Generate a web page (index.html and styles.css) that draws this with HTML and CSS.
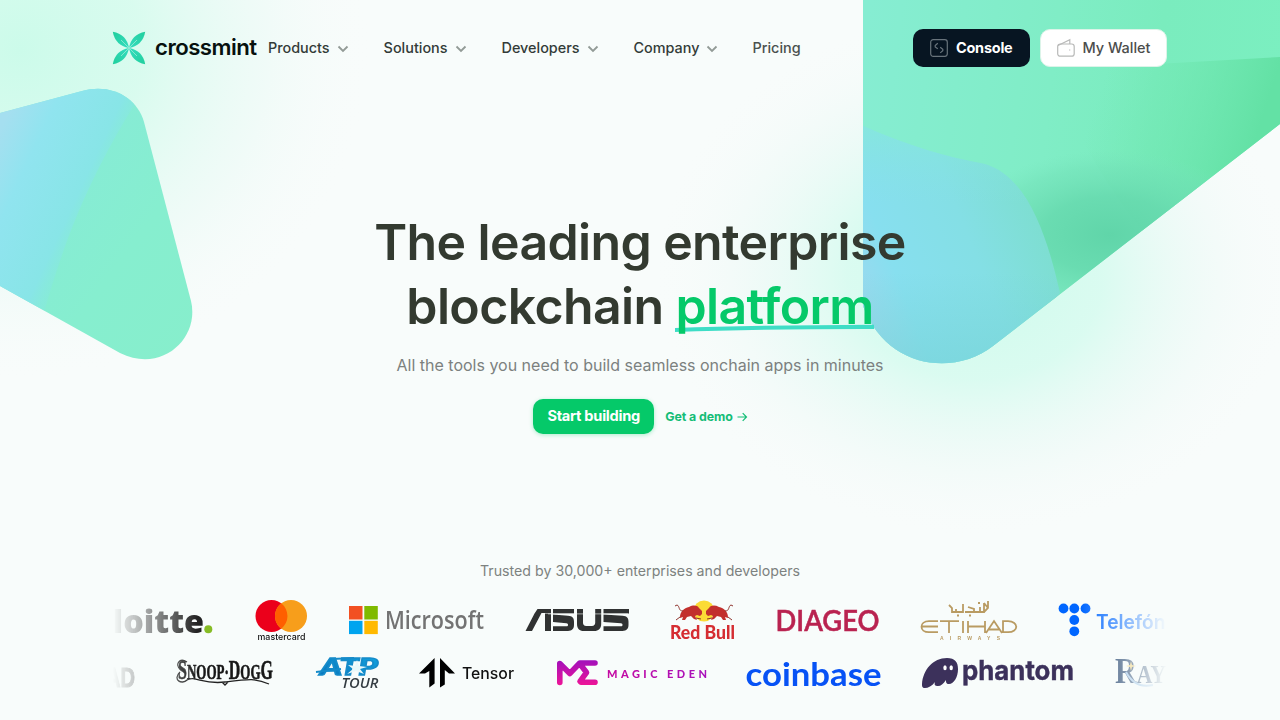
FILE: index.html
```html
<!DOCTYPE html>
<html lang="en">
<head>
<meta charset="utf-8">
<title>Crossmint</title>
<link rel="stylesheet" href="styles.css">
</head>
<body>
<svg class="backdrop" viewBox="0 0 1280 720" aria-hidden="true">
  <defs>
    <radialGradient id="glowA"><stop offset="0" stop-color="#c4fbe7"/><stop offset=".35" stop-color="#cdfbea" stop-opacity=".85"/><stop offset=".7" stop-color="#e0f9f1" stop-opacity=".4"/><stop offset="1" stop-color="#f8fbfa" stop-opacity="0"/></radialGradient>
    <radialGradient id="glowB"><stop offset="0" stop-color="#c9fbea"/><stop offset=".4" stop-color="#d3fbee" stop-opacity=".9"/><stop offset=".7" stop-color="#e7f9f4" stop-opacity=".5"/><stop offset="1" stop-color="#f8fafa" stop-opacity="0"/></radialGradient>
    <linearGradient id="leftMint" x1="0" y1="0" x2="1" y2="1"><stop offset="0" stop-color="#87e8dd"/><stop offset=".6" stop-color="#86eecf"/><stop offset="1" stop-color="#87eecb"/></linearGradient>
    <linearGradient id="leftBlue" gradientUnits="userSpaceOnUse" x1="0" y1="130" x2="118" y2="185"><stop offset="0" stop-color="#a5dff0"/><stop offset=".3" stop-color="#90e4ef"/><stop offset=".75" stop-color="#88e5e7"/><stop offset="1" stop-color="#86ebd8" stop-opacity="0"/></linearGradient>
    <linearGradient id="mint" gradientUnits="userSpaceOnUse" x1="863" y1="60" x2="1280" y2="110"><stop offset="0" stop-color="#86edd2"/><stop offset=".45" stop-color="#80edc6"/><stop offset=".7" stop-color="#7aecbe"/><stop offset="1" stop-color="#7befc0"/></linearGradient>
    <linearGradient id="wing" gradientUnits="userSpaceOnUse" x1="1110" y1="60" x2="1265" y2="110"><stop offset="0" stop-color="#71e7b0" stop-opacity="0"/><stop offset="1" stop-color="#63e1a5"/></linearGradient>
    <radialGradient id="shade"><stop offset="0" stop-color="#60d5a9"/><stop offset=".45" stop-color="#66d9ae" stop-opacity=".85"/><stop offset=".8" stop-color="#70dfb6" stop-opacity=".45"/><stop offset="1" stop-color="#78e5bd" stop-opacity="0"/></radialGradient>
    <linearGradient id="blue" gradientUnits="userSpaceOnUse" x1="863" y1="300" x2="1050" y2="225"><stop offset="0" stop-color="#99d9ef"/><stop offset=".2" stop-color="#87dfef"/><stop offset=".6" stop-color="#84dfe5"/><stop offset="1" stop-color="#7ddecf"/></linearGradient>
    <linearGradient id="blueTop" x1="0" y1="0" x2="0" y2="1"><stop offset="0" stop-color="#86ebd6" stop-opacity=".6"/><stop offset=".32" stop-color="#88e3e8" stop-opacity="0"/><stop offset=".6" stop-color="#76d3d2" stop-opacity="0"/><stop offset="1" stop-color="#76d3d6" stop-opacity=".65"/></linearGradient>
    <clipPath id="leftClip"><path d="M0 113 82 91C112 83 137 98 144 122L191 301C200 338 162 374 120 353L0 286Z"/></clipPath>
    <clipPath id="rightClip"><path d="M863 0H1280V124L993 346C953 377 886 368 863 306Z"/></clipPath>
  </defs>
  <ellipse cx="20" cy="50" rx="350" ry="330" fill="url(#glowA)" opacity=".85"/>
  <ellipse cx="975" cy="275" rx="320" ry="260" fill="url(#glowB)" opacity=".9"/>
  <g clip-path="url(#leftClip)">
    <rect y="80" width="210" height="290" fill="url(#leftMint)"/>
    <path d="M0 80H150C98 160 68 225 42 320H0Z" fill="url(#leftBlue)"/>
  </g>
  <g clip-path="url(#rightClip)">
    <rect x="863" width="417" height="370" fill="url(#mint)"/>
    <path d="M1050 70 1280 57V180L1150 240Q1090 170 1050 70Z" fill="url(#wing)"/>
    <ellipse cx="1110" cy="235" rx="150" ry="85" fill="url(#shade)"/>
    <path d="M863 126C903 144 946 157 985 164C1029 177 1048 240 1060 293L1000 370H863Z" fill="url(#blue)"/>
    <path d="M863 126C903 144 946 157 985 164C1029 177 1048 240 1060 293L1000 370H863Z" fill="url(#blueTop)"/>
  </g>
</svg>

<header class="header">
  <a class="brand">
    <svg width="34" height="34" viewBox="0 0 34 34">
      <defs><linearGradient id="leaf" x1="0" y1="0" x2="1" y2="1"><stop offset="0" stop-color="#20cf9c"/><stop offset="1" stop-color="#35dcc0"/></linearGradient></defs>
      <g fill="url(#leaf)">
        <path id="petal" d="M.8.8Q14.5 3.2 17 17 3.2 14.5.8.8Z"/>
        <use href="#petal" transform="rotate(90 17 17)"/><use href="#petal" transform="rotate(180 17 17)"/><use href="#petal" transform="rotate(270 17 17)"/>
      </g>
      <path d="m9 9 16 16M25 9 9 25" stroke="#9becd5" stroke-width=".8"/>
    </svg>
    <span class="brand-name">crossmint</span>
  </a>
  <nav class="nav">
    <a>Products<svg class="chev" viewBox="0 0 12 8"><path d="m1.5 1.5 4.5 4.5 4.5-4.5"/></svg></a>
    <a>Solutions<svg class="chev" viewBox="0 0 12 8"><path d="m1.5 1.5 4.5 4.5 4.5-4.5"/></svg></a>
    <a>Developers<svg class="chev" viewBox="0 0 12 8"><path d="m1.5 1.5 4.5 4.5 4.5-4.5"/></svg></a>
    <a>Company<svg class="chev" viewBox="0 0 12 8"><path d="m1.5 1.5 4.5 4.5 4.5-4.5"/></svg></a>
    <a class="plain">Pricing</a>
  </nav>
  <div class="actions">
    <a class="btn console"><svg width="18" height="18" viewBox="0 0 18 18"><rect x=".7" y=".7" width="16.6" height="16.6" rx="2.5"/><path d="M7.8 4.2 5.2 6.5V8L7.8 9.8M10.2 8.2 12.8 10.2V11.7L10.2 13.9"/></svg><span>Console</span></a>
    <a class="btn wallet"><svg width="18" height="18" viewBox="0 0 18 18"><rect x=".7" y="5" width="16.5" height="12.2" rx="2.5"/><path d="M1 6.5 12.8.8V5M12.7 10.6v1"/></svg><span>My Wallet</span></a>
  </div>
</header>

<main class="hero">
  <h1>The leading enterprise<br>blockchain <span class="accent">platform<svg class="underline" viewBox="0 0 200 8" preserveAspectRatio="none"><path d="M0 4Q80 1.2 200 .8V5Q90 4.8 0 8Z"/></svg></span></h1>
  <p class="lead">All the tools you need to build seamless onchain apps in minutes</p>
  <div class="cta"><a class="start">Start building</a><a class="demo">Get a demo <svg width="10" height="10" viewBox="0 0 10 10"><path d="M.5 5h9M5.7 1.2 9.5 5 5.7 8.8"/></svg></a></div>
</main>

<section class="trusted">
  <p>Trusted by 30,000+ enterprises and developers</p>
  <div class="logos">
    <div class="row first">
      <svg width="100" height="42" viewBox="113 599 100 42"><text x="69" y="633" class="deloitte" textLength="135" lengthAdjust="spacingAndGlyphs">Deloitte</text><circle cx="208.3" cy="629.3" r="4" fill="#86bc25"/></svg>
      <svg width="52" height="42" viewBox="255 599 52 42"><circle cx="271.5" cy="616" r="16" fill="#eb001b"/><circle cx="291" cy="616" r="16" fill="#f79e1b"/><path d="M281.2 603.3a16 16 0 0 1 0 25.4 16 16 0 0 1 0-25.4Z" fill="#ff5f00"/><text x="257.5" y="640" class="mc" textLength="48" lengthAdjust="spacingAndGlyphs">mastercard</text></svg>
      <svg width="136" height="42" viewBox="348 599 136 42"><path fill="#f25022" d="M349 606h13.5v13.5H349z"/><path fill="#7fba00" d="M364.3 606h13.5v13.5h-13.5z"/><path fill="#00a4ef" d="M349 620.8h13.5v13.3H349z"/><path fill="#ffb900" d="M364.3 620.8h13.5v13.3h-13.5z"/><text x="385" y="629" class="ms" textLength="99" lengthAdjust="spacingAndGlyphs">Microsoft</text></svg>
      <svg width="105" height="42" viewBox="525 599 105 42" fill="#303232"><path d="M537.5 609H551v4h-9.5L532 631h-6.5L534.5 613.5ZM545 613.5h6V631h-6ZM553 609h21v4.5h-21ZM553 614.5l15 1.3c4.5.4 6 2.3 6 6v3c0 4-2 6.2-6 6.2h-15v-4.7h13.5c1 0 1.5-.4 1.5-1.5s-.5-1.5-1.5-1.6l-13.5-1.3ZM577 609h6v13.8c0 2 1 3.2 3.2 3.2H592c2 0 3.2-1.2 3.2-3.2V609h6v15c0 4.7-2.8 7-7 7h-10.5c-4.3 0-6.7-2.3-6.7-7ZM603.5 609h25.5v4.5h-25.5ZM603.5 614.5l19 1.3c4.5.4 6 2.3 6 6v3c0 4-2 6.2-6 6.2h-19v-4.7H621c1 0 1.5-.4 1.5-1.5s-.5-1.5-1.5-1.6l-17.5-1.3Z"/><path d="M548 613.9h80" stroke="#f8fbfa" stroke-width=".6"/></svg>
      <svg width="66" height="42" viewBox="670 599 66 42"><circle cx="704" cy="611" r="10.5" fill="#fbdb36"/><g id="bull"><path fill="#c2302d" d="M680 617c0-5 4-9 9-10 4-2 8-2 10 1l3 3v3l-2 2-3-1-2 1 2 4-3-1-3-3-4 1-2 3h-3l1-3-3 1Z"/><path fill="none" stroke="#8e332c" d="M683 611c-5 0-3-5-6-6l-2 1M680 617l-4 3M696 618l5 1"/></g><use href="#bull" transform="matrix(-1 0 0 1 1408 0)"/><text x="670" y="639" class="rb" textLength="65" lengthAdjust="spacingAndGlyphs">Red Bull</text></svg>
      <svg width="103" height="42" viewBox="776 599 103 42"><text x="774.5" y="631" class="diageo" textLength="104" lengthAdjust="spacingAndGlyphs">DIAGEO</text></svg>
      <svg width="98" height="42" viewBox="920 599 98 42"><g fill="none" stroke="#b99b62" stroke-width="1.8"><path d="M949 605l3 3v4h11v-8M956 612v-3M965 612h9v-3l-6-2M974 612h6v-5M980 612h4v-9M984 612l4-4V601M988 608l-4-5M978 603h2M969 615.5h2M957 615.5h2"/><path d="M938 621.2h-9c-10 0-10 11 0 11h9M922 626.5h16M940 621.2h19M949 621v12M963 621v12M968 621v12M985 621v12M968 626.5h17M986 633l8-12 8 12M989 629.5h10M1003 632.2v-11h5c11 0 11 11 0 11Z"/></g><text x="940" y="640" class="airways" textLength="60">AIRWAYS</text></svg>
      <svg width="132" height="42" viewBox="1059 599 132 42"><g fill="#0066ff"><circle cx="1063.5" cy="608.5" r="4.9"/><circle cx="1074.3" cy="608.5" r="4.9"/><circle cx="1085.5" cy="608.5" r="4.9"/><circle cx="1074.3" cy="620" r="4.9"/><circle cx="1074.3" cy="631.3" r="4.9"/></g><text x="1096" y="628.5" class="telefonica" textLength="97" lengthAdjust="spacingAndGlyphs">Telefónica</text></svg>
    </div>
    <div class="row second">
      <svg width="22" height="38" viewBox="113 654 22 38"><text x="106" y="687" class="ad" textLength="29" lengthAdjust="spacingAndGlyphs">AD</text></svg>
      <svg width="98" height="38" viewBox="175 654 98 38"><text x="178" y="679" class="snoop" textLength="95" lengthAdjust="spacingAndGlyphs"><tspan font-size="27">S</tspan>NOOP·<tspan font-size="27">D</tspan>OG<tspan font-size="27">G</tspan></text><path fill="none" stroke="#222" stroke-width="1.3" d="M187 662c-8-5-12 3-7 7M180 672c-8 8 2 13 7 8 8-5 16 5 38 2 24-3 31-4 44 2M222 682l3 3 3-3"/></svg>
      <svg width="65" height="38" viewBox="314 654 65 38"><defs><linearGradient id="atp" x1="0" y1="1" x2="1" y2="0"><stop stop-color="#0871b8"/><stop offset="1" stop-color="#12a6e2"/></linearGradient></defs><text x="320" y="675" class="atp" textLength="58" lengthAdjust="spacingAndGlyphs">ATP</text><path d="M316 672 341 669M332 659l22-1" stroke="#168bc9" stroke-width="2"/><path d="m347 674 6-5-5-4 7 1 2-6 2 6 8 1-7 2 4 5-8-3Z" fill="#eaf8fa"/><text x="341.5" y="687.5" class="tour" textLength="37" lengthAdjust="spacingAndGlyphs">TOUR</text></svg>
      <svg width="96" height="38" viewBox="419 654 96 38"><path d="M434.6 658v25.5l-5.3 4V671L425 673.5h-6ZM440 658l15 15.5h-6l-4.2-3.5v14.5l-4.8 3Z"/><text x="462" y="679" class="tensor" textLength="52" lengthAdjust="spacingAndGlyphs">Tensor</text></svg>
      <svg width="152" height="38" viewBox="555 654 152 38"><defs><linearGradient id="me" gradientUnits="userSpaceOnUse" x1="0" y1="660" x2="0" y2="685"><stop stop-color="#a010bc"/><stop offset="1" stop-color="#ed1597"/></linearGradient><linearGradient id="meText"><stop stop-color="#c50aa2"/><stop offset="1" stop-color="#a812bb"/></linearGradient></defs><path d="M559.8 682.5v-19l10 10 10-10.5H595M580 664l6.5 8.5-6.5 8.8 1 1h14" fill="none" stroke="url(#me)" stroke-width="5.6" stroke-linecap="round" stroke-linejoin="round"/><text x="607" y="677.5" class="magic" textLength="100">MAGIC EDEN</text></svg>
      <svg width="136" height="38" viewBox="746 654 136 38"><text x="744.5" y="685.5" class="coinbase" textLength="136" lengthAdjust="spacingAndGlyphs">coinbase</text></svg>
      <svg width="153" height="38" viewBox="924 654 153 38"><path fill="#3c315b" d="M922 684c1-14 11-26 25-26 8 0 11 4 11 11 0 8-4 15-9 15-3 0-3-2-3-4-3 4-5 6-8 6-3 0-4-1-3-4-3 4-7 6-10 6s-3-2-3-4Z"/><ellipse cx="945" cy="667.8" rx="1.7" ry="2.5" fill="#fff"/><ellipse cx="951.2" cy="667.8" rx="1.7" ry="2.5" fill="#fff"/><text x="962" y="680.2" class="phantom" textLength="112" lengthAdjust="spacingAndGlyphs">phantom</text></svg>
      <svg width="72" height="38" viewBox="1117 654 72 38"><text x="1115" y="683" class="rays" textLength="63" lengthAdjust="spacingAndGlyphs"><tspan font-size="35">R</tspan>AYS</text><path d="M1126 672q9 17 27 13" fill="none" stroke="#8fbce6" stroke-width="2"/><path d="m1131 661 1 4 4 1-4 1-1 4-1-4-4-1 4-1Z" fill="#f2cd66"/></svg>
    </div>
  </div>
</section>
</body>
</html>
```
FILE: styles.css
```css
* { box-sizing: border-box; }
body { margin: 0; width: 1280px; height: 720px; overflow: hidden; background: #f8fcfb; font-family: Inter, "Liberation Sans", sans-serif; color: #333a30; position: relative; }
svg { display: block; flex-shrink: 0; overflow: visible; }
.backdrop { position: absolute; inset: 0; width: 1280px; height: 720px; z-index: -1; }
.header { height: 96px; padding: 0 113px 0 112px; display: flex; align-items: center; }
.brand { display: flex; align-items: center; gap: 9px; width: 156px; }
.brand-name { font-size: 22.2px; font-weight: 600; letter-spacing: -.52px; color: #07110e; padding-bottom: 4px; }
.nav { display: flex; align-items: center; gap: 35px; font-size: 14.4px; font-weight: 500; color: #333b38; padding-bottom: 2px; }
.nav a { display: flex; align-items: center; gap: 7px; }
.nav .plain { color: #4a514e; margin-left: -1px; }
.chev { width: 12px; height: 8px; fill: none; stroke: #929a96; stroke-width: 1.8; margin-top: 3px; }
.actions { display: flex; gap: 10px; margin-left: auto; }
.btn { height: 38px; border-radius: 10px; display: flex; align-items: center; gap: 8px; padding: 0 16px 0 17px; font-size: 14.5px; white-space: nowrap; }
.btn svg { fill: none; stroke-width: 1.2; }
.btn span { padding-bottom: 2px; }
.console { width: 117px; background: #071522; color: #fff; font-weight: 700; letter-spacing: -.25px; }
.console svg { stroke: #68737b; }
.wallet { width: 127px; background: #fff; color: #4b4d4c; font-weight: 500; border: 1px solid #dcf4e9; padding-left: 16px; letter-spacing: -.05px; gap: 7.5px; }
.wallet svg { stroke: #b8b9b8; }
.hero { height: 466px; padding-top: 114px; text-align: center; }
h1 { margin: 0; font-size: 50px; line-height: 64px; font-weight: 600; letter-spacing: -.62px; }
.accent { color: #05c969; position: relative; display: inline-block; z-index: 0; }
.underline { position: absolute; left: 0; bottom: 6px; width: 199px; height: 8px; z-index: -1; fill: #3eddc6; }
.lead { margin: 14px 0 0; font-size: 16px; line-height: 26px; color: #7c817f; }
.cta { display: flex; justify-content: center; align-items: center; gap: 11px; margin-top: 21px; }
.start { width: 121px; height: 35px; border-radius: 10px; background: #05c969; color: #fff; font-size: 14.6px; line-height: 34px; font-weight: 700; letter-spacing: -.25px; box-shadow: 0 1px 4px #05c96950; }
.demo { display: flex; align-items: center; gap: 4px; color: #15bd77; font-size: 12.4px; font-weight: 700; letter-spacing: -.08px; }
.demo svg { fill: none; stroke: currentColor; stroke-width: 1.2; }
.trusted p { margin: 0; text-align: center; font-size: 14.2px; line-height: 18px; color: #7d8280; }
.trusted { padding: 0 113px; }
.logos { margin-top: 19px; overflow: hidden; display: grid; gap: 13px; mask-image: linear-gradient(90deg, transparent, #000 85px, #000 968px, transparent); }
.row { display: flex; }
.row.first { gap: 41px; }
.row.second { gap: 40.3px; }
.row.first svg:nth-child(2) { margin-left: 1px; }
.row.first svg:nth-child(n+4) { margin-left: -.4px; }
.deloitte { font: 800 32px "Open Sans", sans-serif; fill: #222; }
.mc { font: 500 9px Inter, sans-serif; fill: #111; }
.ms { font: 600 25px "Open Sans", sans-serif; fill: #737373; }
.rb { font: 900 19.5px Lato, sans-serif; fill: #d52d32; }
.diageo { font: 600 29px Lato, sans-serif; fill: #b92350; stroke: #b92350; stroke-width: .5px; }
.airways { font: 700 5px "Liberation Sans", sans-serif; fill: #b99b62; }
.telefonica { font: 600 20px Inter, sans-serif; fill: #0066ff; }
.ad { font: 700 27px "Liberation Sans", sans-serif; fill: #333; stroke: #333; stroke-width: 1px; }
.snoop { font: 700 22px "Liberation Serif", serif; fill: #171717; stroke: #171717; stroke-width: .6px; }
.atp { font: italic 900 23px Lato, sans-serif; fill: url(#atp); stroke: #168bc9; stroke-width: 1.3px; }
.tour { font: italic 600 14.5px "Open Sans", sans-serif; fill: #343c42; }
.tensor { font: 500 16px Inter, sans-serif; fill: #111; }
.magic { font: 900 11px Lato, sans-serif; fill: url(#meText); }
.coinbase { font: 700 32px Lato, sans-serif; fill: #0752f5; }
.phantom { font: 700 27px Inter, sans-serif; fill: #3c315b; stroke: #3c315b; stroke-width: .4px; }
.rays { font: 700 25px "Liberation Serif", serif; fill: #092c5c; }
```
